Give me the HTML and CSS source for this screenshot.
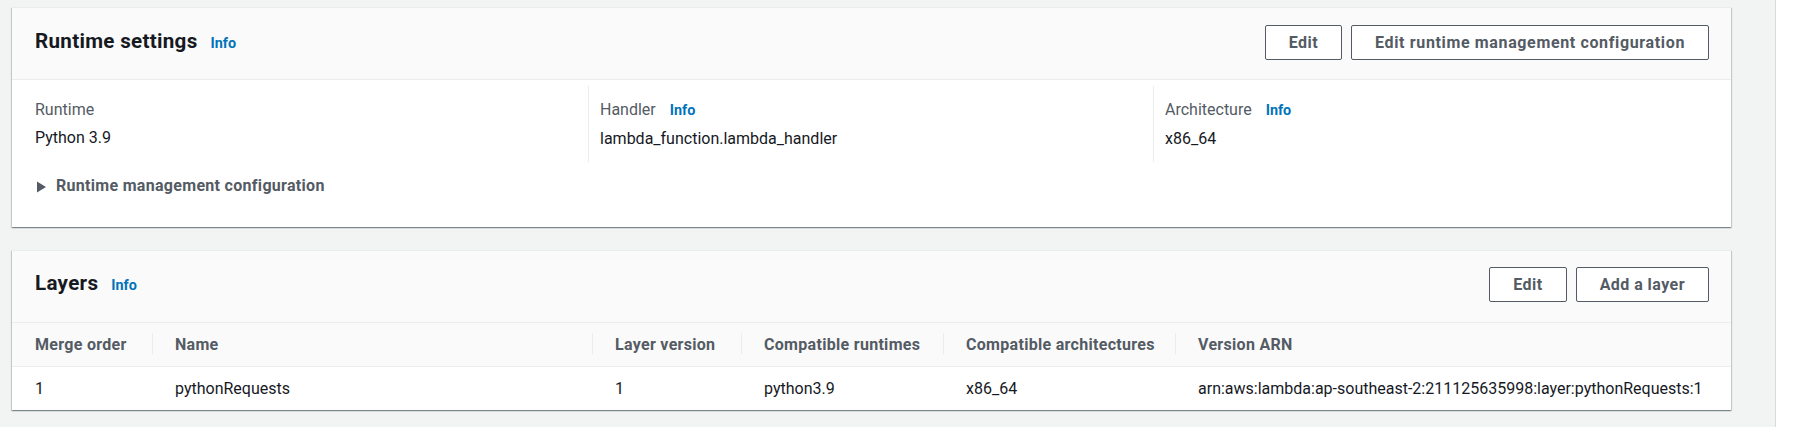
FILE: index.html
```html
<!DOCTYPE html>
<html lang="en">
<head>
<meta charset="utf-8">
<title>Runtime settings</title>
<link rel="stylesheet" href="styles.css">
</head>
<body>
<div class="layout">
  <main class="content">
    <section class="card">
      <header class="card-header">
        <div class="title-wrap">
          <h2 class="title">Runtime settings</h2>
          <a class="info">Info</a>
        </div>
        <div class="actions">
          <button class="btn">Edit</button>
          <button class="btn btn-wide">Edit runtime management configuration</button>
        </div>
      </header>
      <div class="card-body">
        <div class="cols">
          <div class="col">
            <div class="label">Runtime</div>
            <div class="value">Python 3.9</div>
          </div>
          <div class="col">
            <div class="label">Handler <a class="info label-info">Info</a></div>
            <div class="value">lambda_function.lambda_handler</div>
          </div>
          <div class="col">
            <div class="label">Architecture <a class="info label-info">Info</a></div>
            <div class="value">x86_64</div>
          </div>
        </div>
        <div class="expand">
          <svg class="caret" width="11" height="12" viewBox="0 0 11 12" aria-hidden="true"><polygon points="1,0.5 10,6 1,11.5" fill="#545b64"/></svg>
          <span>Runtime management configuration</span>
        </div>
      </div>
    </section>

    <section class="card card-layers">
      <header class="card-header card-header-layers">
        <div class="title-wrap">
          <h2 class="title">Layers</h2>
          <a class="info">Info</a>
        </div>
        <div class="actions">
          <button class="btn">Edit</button>
          <button class="btn">Add a layer</button>
        </div>
      </header>
      <table class="table">
        <colgroup>
          <col class="c1"><col class="c2"><col class="c3"><col class="c4"><col class="c5"><col class="c6">
        </colgroup>
        <thead>
          <tr>
            <th>Merge order</th>
            <th>Name</th>
            <th>Layer version</th>
            <th>Compatible runtimes</th>
            <th>Compatible architectures</th>
            <th>Version ARN</th>
          </tr>
        </thead>
        <tbody>
          <tr>
            <td>1</td>
            <td>pythonRequests</td>
            <td>1</td>
            <td>python3.9</td>
            <td>x86_64</td>
            <td>arn:aws:lambda:ap-southeast-2:211125635998:layer:pythonRequests:1</td>
          </tr>
        </tbody>
      </table>
    </section>
  </main>
  <aside class="side"></aside>
</div>
</body>
</html>
```

FILE: styles.css
```css
* { box-sizing: border-box; }

html, body {
  margin: 0;
  padding: 0;
  height: 100%;
}

body {
  font-family: Roboto, "Liberation Sans", Arial, sans-serif;
  font-size: 16px;
  line-height: 25px;
  color: #16191f;
  background: #f2f3f3;
}

.layout {
  display: flex;
  min-height: 100%;
}

.content {
  flex: 1;
  padding: 7px 44px 0 12px;
}

.side {
  width: 22px;
  flex: none;
  background: #ffffff;
  border-left: 1px solid #d5dbdb;
}

.card {
  background: #ffffff;
  border-top: 1px solid #eaeded;
  box-shadow: 0 1px 1px 0 rgba(0, 28, 36, 0.3),
              1px 1px 1px 0 rgba(0, 28, 36, 0.15),
              -1px 1px 1px 0 rgba(0, 28, 36, 0.15);
}

.card-layers {
  margin-top: 23px;
}

.card-header {
  display: flex;
  align-items: center;
  justify-content: space-between;
  padding: 17px 22px 19px 23px;
  background: #fafafa;
  border-bottom: 1px solid #eaeded;
}

.card-header-layers {
  padding-top: 16px;
  padding-bottom: 20px;
}

.title-wrap {
  display: flex;
  align-items: baseline;
}

.title {
  margin: 0;
  font-size: 20.6px;
  line-height: 25px;
  font-weight: 700;
  letter-spacing: 0.3px;
  color: #16191f;
}

.info {
  margin-left: 13px;
  font-size: 14.4px;
  font-weight: 700;
  color: #0073bb;
  text-decoration: none;
  cursor: pointer;
}

.label-info {
  margin-left: 10px;
}

.actions {
  display: flex;
  gap: 9px;
}

.btn {
  height: 35px;
  padding: 0 23px;
  background: #ffffff;
  border: 1px solid #545b64;
  border-radius: 2px;
  font-family: inherit;
  font-size: 16px;
  font-weight: 700;
  letter-spacing: 0.45px;
  color: #545b64;
  cursor: pointer;
}

.btn-wide {
  letter-spacing: 0.64px;
}

.card-body {
  padding: 6px 0 29px 0;
}

.cols {
  display: grid;
  grid-template-columns: repeat(3, 1fr);
  padding: 0 13px 0 11px;
}

.col {
  padding: 11px 0 11px 12px;
}

.col + .col {
  border-left: 1px solid #eaeded;
  padding-left: 11px;
}

.label {
  color: #545b64;
  margin-bottom: 3px;
}

.value {
  color: #16191f;
}

.expand {
  display: flex;
  align-items: center;
  margin-top: 11px;
  padding-left: 24px;
  font-weight: 700;
  letter-spacing: 0.3px;
  color: #545b64;
}

.caret {
  flex: none;
  margin-right: 9px;
  margin-top: 2px;
}

.table {
  width: 100%;
  border-collapse: collapse;
  table-layout: fixed;
}

.c1 { width: 140px; }
.c2 { width: 440px; }
.c3 { width: 149px; }
.c4 { width: 202px; }
.c5 { width: 232px; }
.c6 { width: auto; }

.table th {
  position: relative;
  height: 43px;
  padding: 0 0 0 23px;
  text-align: left;
  font-weight: 700;
  letter-spacing: 0.3px;
  color: #545b64;
  background: #fafafa;
  border-bottom: 1px solid #eaeded;
  white-space: nowrap;
}

.table th + th::before {
  content: "";
  position: absolute;
  left: 0;
  top: 10px;
  height: 21px;
  border-left: 1px solid #eaeded;
}

.table td {
  height: 44px;
  padding: 0 0 0 23px;
  color: #16191f;
  white-space: nowrap;
}
```
